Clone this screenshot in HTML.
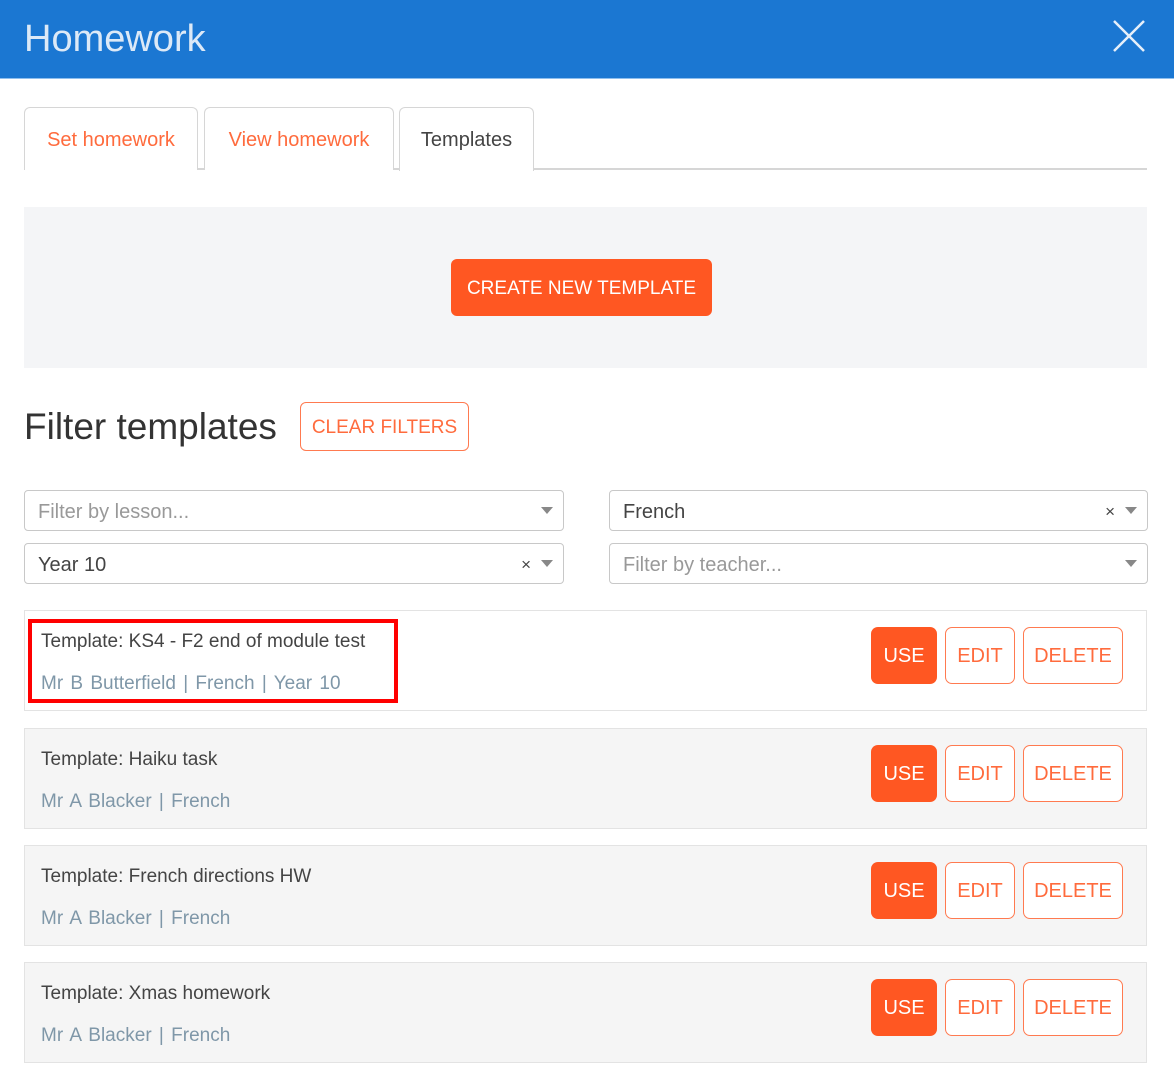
<!DOCTYPE html>
<html><head><style>
*{box-sizing:border-box;margin:0;padding:0}
body{width:1174px;height:1078px;background:#fff;font-family:"Liberation Sans",sans-serif;position:relative;overflow:hidden}
.abs{position:absolute}
.hdr{left:0;top:0;width:1174px;height:79px;background:#1b77d2;border-bottom:1px solid #8fbfee}
.hdr h1{position:absolute;left:24px;top:18px;font-weight:normal;font-size:38px;color:#dce9f7}
.tab{top:107px;height:63px;border:1.5px solid #d6d6d6;border-bottom:none;border-radius:6px 6px 0 0;font-size:20px;color:#ff6b3d;text-align:center;line-height:64px;background:#fff}
.line{left:24px;top:168px;width:1123px;height:1.5px;background:#d6d6d6}
.panel{left:24px;top:207px;width:1123px;height:161px;background:#f4f5f7}
.btn{border-radius:6px;font-size:20px;text-align:center}
.sel{height:41px;border:1.5px solid #c8c8c8;border-radius:4px;font-size:20px;color:#444;padding-left:13px;line-height:42px;background:#fff}
.ph{color:#999}
.arr{position:absolute;right:10px;top:16px;border-left:6px solid transparent;border-right:6px solid transparent;border-top:7px solid #888}
.x{position:absolute;right:32px;top:0;font-size:17px;color:#444}
.card{left:24px;width:1123px;height:101px;border:1.5px solid #e3e3e3;background:#f5f5f5}
.t{position:absolute;left:16px;top:20px;font-size:19px;color:#444}
.m{position:absolute;left:16px;top:62px;font-size:19px;color:#7f97a8;word-spacing:2px}
.use{position:absolute;left:846px;top:16px;width:66px;height:57px;background:#ff5722;color:#fff;border-radius:7px;font-size:20px;line-height:59px;text-align:center}
.ed{position:absolute;left:920px;top:16px;width:70px;height:57px;border:1.5px solid #ff7a50;color:#ff6b3d;border-radius:7px;font-size:20px;line-height:56px;text-align:center;background:#fff}
.de{position:absolute;left:998px;top:16px;width:100px;height:57px;border:1.5px solid #ff7a50;color:#ff6b3d;border-radius:7px;font-size:20px;line-height:56px;text-align:center;background:#fff}
</style></head><body>
<div class="abs hdr"><h1>Homework</h1>
<svg class="abs" style="left:1112px;top:19px" width="34" height="34"><path d="M2 2L32 32M32 2L2 32" stroke="#e6effa" stroke-width="2.5"/></svg></div>
<div class="abs line"></div>
<div class="abs tab" style="left:24px;width:174px">Set homework</div>
<div class="abs tab" style="left:204px;width:190px">View homework</div>
<div class="abs tab" style="left:399px;width:135px;color:#444;height:64px">Templates</div>
<div class="abs panel"></div>
<div class="abs btn" style="left:451px;top:259px;width:261px;height:57px;background:#ff5722;color:#fff;line-height:59px;font-size:19px">CREATE NEW TEMPLATE</div>
<div class="abs" style="left:24px;top:406px;font-size:37px;color:#333">Filter templates</div>
<div class="abs btn" style="left:300px;top:402px;width:169px;height:49px;border:1.5px solid #ff7a50;color:#ff6b3d;line-height:49px;font-size:19px">CLEAR FILTERS</div>
<div class="abs sel ph" style="left:24px;top:490px;width:540px">Filter by lesson...<span class="arr"></span></div>
<div class="abs sel" style="left:609px;top:490px;width:539px">French<span class="x">×</span><span class="arr"></span></div>
<div class="abs sel" style="left:24px;top:543px;width:540px">Year 10<span class="x">×</span><span class="arr"></span></div>
<div class="abs sel ph" style="left:609px;top:543px;width:539px">Filter by teacher...<span class="arr"></span></div>

<div class="abs card" style="top:610px;background:#fff"><div class="t">Template: KS4 - F2 end of module test</div><div class="m">Mr B Butterfield | French | Year 10</div><div class="use">USE</div><div class="ed">EDIT</div><div class="de">DELETE</div></div>
<div class="abs" style="left:28px;top:619px;width:370px;height:84px;border:4px solid #f00"></div>
<div class="abs card" style="top:728px"><div class="t">Template: Haiku task</div><div class="m">Mr A Blacker | French</div><div class="use">USE</div><div class="ed">EDIT</div><div class="de">DELETE</div></div>
<div class="abs card" style="top:845px"><div class="t">Template: French directions HW</div><div class="m">Mr A Blacker | French</div><div class="use">USE</div><div class="ed">EDIT</div><div class="de">DELETE</div></div>
<div class="abs card" style="top:962px"><div class="t">Template: Xmas homework</div><div class="m">Mr A Blacker | French</div><div class="use">USE</div><div class="ed">EDIT</div><div class="de">DELETE</div></div>
</body></html>
